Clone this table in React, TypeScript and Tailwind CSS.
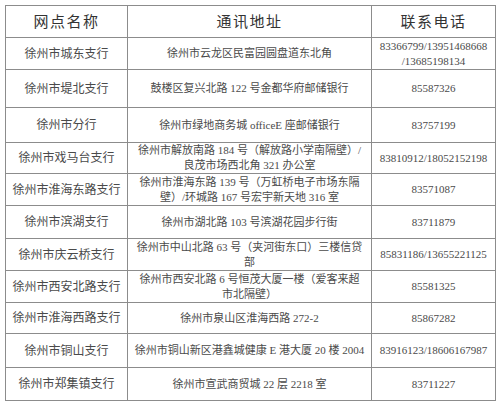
const rows: { name: string; addr: string[]; phone: string[]; h: number }[] = [
  { name: "徐州市城东支行", addr: ["徐州市云龙区民富园圆盘道东北角"], phone: ["83366799/13951468668", "/13685198134"], h: 32 },
  { name: "徐州市堤北支行", addr: ["鼓楼区复兴北路 122 号金都华府邮储银行"], phone: ["85587326"], h: 38 },
  { name: "徐州市分行", addr: ["徐州市绿地商务城 officeE 座邮储银行"], phone: ["83757199"], h: 35 },
  { name: "徐州市戏马台支行", addr: ["徐州市解放南路 184 号（解放路小学南隔壁）/", "良茂市场西北角 321 办公室"], phone: ["83810912/18052152198"], h: 31 },
  { name: "徐州市淮海东路支行", addr: ["徐州市淮海东路 139 号（万虹桥电子市场东隔", "壁）/环城路 167 号宏宇新天地 316 室"], phone: ["83571087"], h: 32 },
  { name: "徐州市滨湖支行", addr: ["徐州市湖北路 103 号滨湖花园步行街"], phone: ["83711879"], h: 33 },
  { name: "徐州市庆云桥支行", addr: ["徐州市中山北路 63 号（夹河街东口）三楼信贷", "部"], phone: ["85831186/13655221125"], h: 32 },
  { name: "徐州市西安北路支行", addr: ["徐州市西安北路 6 号恒茂大厦一楼（爱客来超", "市北隔壁）"], phone: ["85581325"], h: 32 },
  { name: "徐州市淮海西路支行", addr: ["徐州市泉山区淮海西路 272-2"], phone: ["85867282"], h: 31 },
  { name: "徐州市铜山支行", addr: ["徐州市铜山新区港鑫城健康 E 港大厦 20 楼 2004"], phone: ["83916123/18606167987"], h: 34 },
  { name: "徐州市郑集镇支行", addr: ["徐州市宣武商贸城 22 层 2218 室"], phone: ["83711227"], h: 33 },
]

const font = { fontFamily: '"Liberation Serif", "Noto Sans CJK SC", serif' }

export default function App() {
  return (
    <div className="w-[500px] h-[411px] bg-white pt-[5px] pl-[5px]" style={font}>
      <table className="w-[490px] border-collapse table-fixed text-[#4a4a4a]">
        <colgroup>
          <col className="w-[122px]" />
          <col className="w-[244px]" />
          <col className="w-[124px]" />
        </colgroup>
        <thead>
          <tr className="h-[32px]">
            {["网点名称", "通讯地址", "联系电话"].map((t) => (
              <th key={t} className="border border-[#8c8c8c] text-center align-middle text-[15px] leading-[20px] font-normal tracking-[1.5px] text-[#333]">
                {t}
              </th>
            ))}
          </tr>
        </thead>
        <tbody>
          {rows.map((r) => (
            <tr key={r.name} style={{ height: r.h }}>
              <td className="border border-[#8c8c8c] text-center align-middle text-[12px] leading-[16px] px-1">{r.name}</td>
              <td className="border border-[#8c8c8c] text-center align-middle text-[11px] leading-[15px] px-1">
                {r.addr.map((l, i) => (
                  <div key={i} className="whitespace-nowrap">{l}</div>
                ))}
              </td>
              <td className="border border-[#8c8c8c] text-center align-middle text-[11px] leading-[15px]">
                {r.phone.map((l, i) => (
                  <div key={i} className="whitespace-nowrap">{l}</div>
                ))}
              </td>
            </tr>
          ))}
        </tbody>
      </table>
    </div>
  )
}
